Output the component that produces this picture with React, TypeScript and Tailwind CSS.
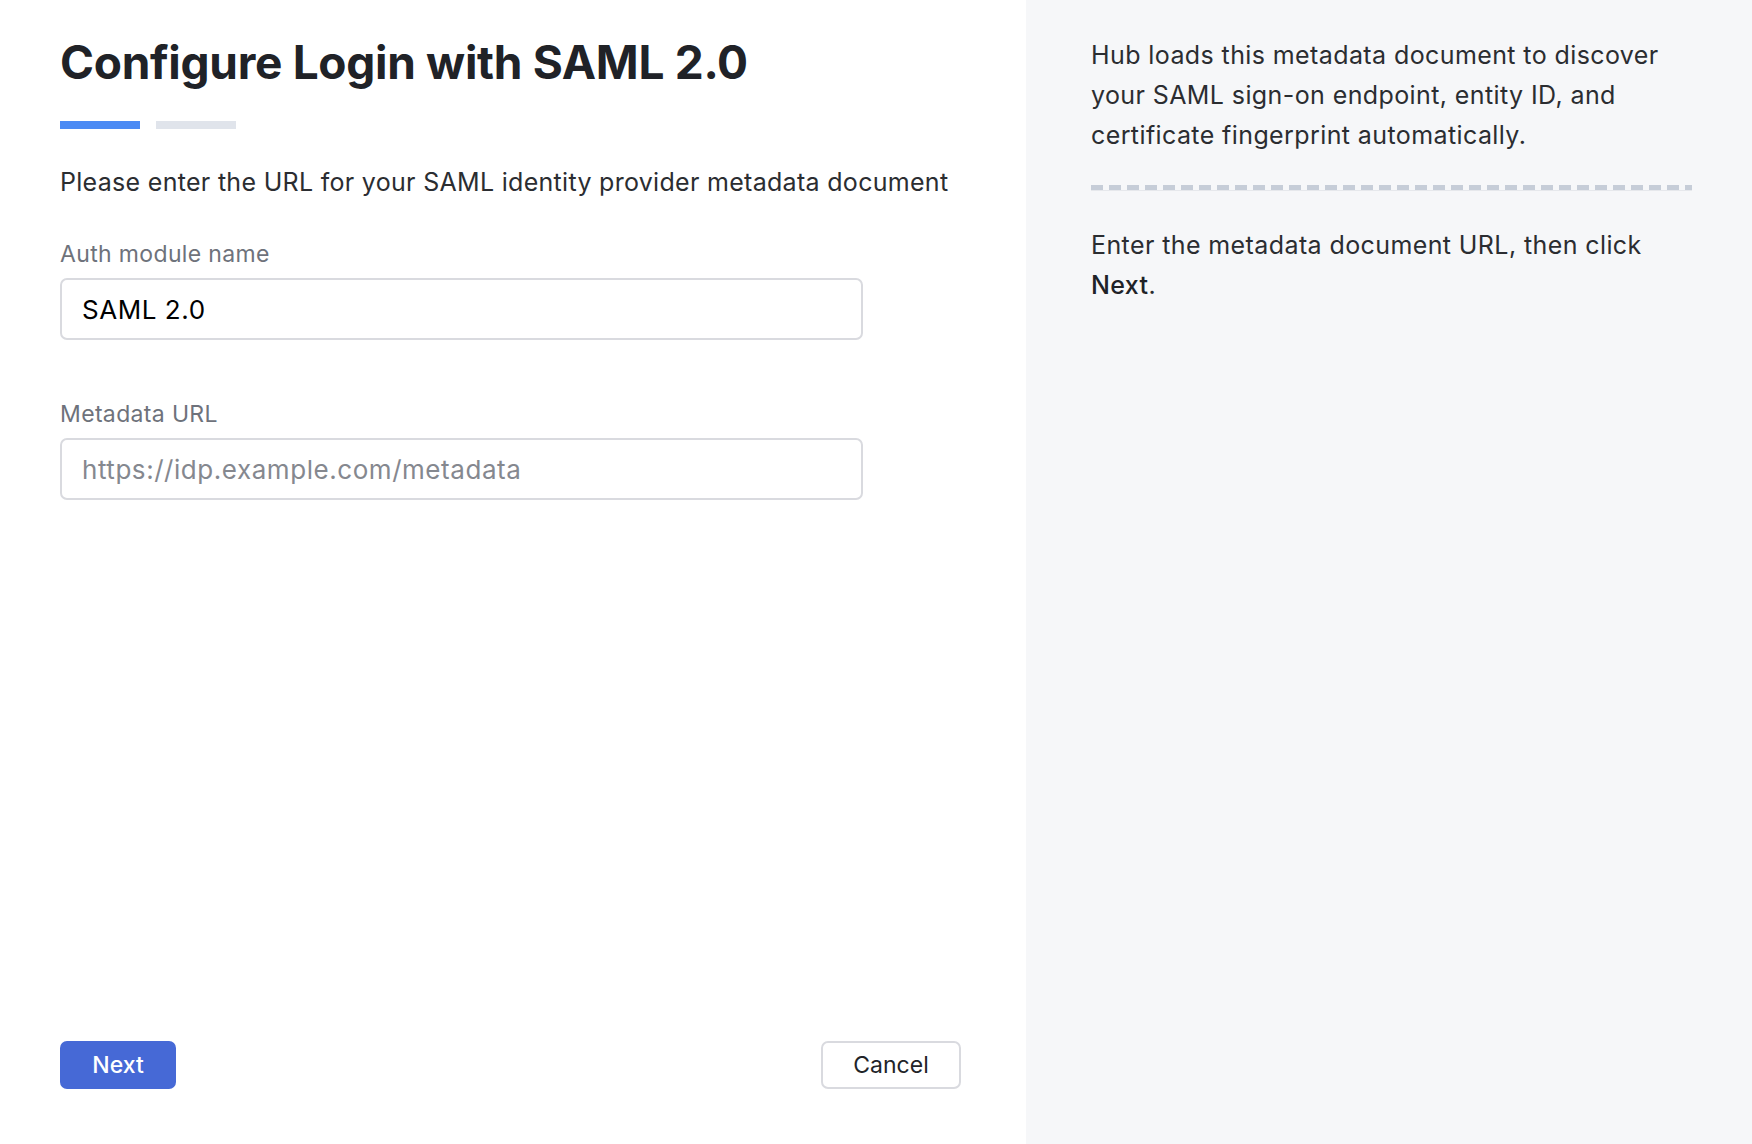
import React, { useEffect, useRef, useState } from 'react';

const font = { fontFamily: 'Inter, "Noto Sans", sans-serif' };

const Field: React.FC<{
  label: string;
  value: string;
  placeholder?: string;
  onChange: (v: string) => void;
  className?: string;
  autoFocus?: boolean;
}> = ({ label, value, placeholder, onChange, className, autoFocus }) => {
  const inputRef = useRef<HTMLInputElement | null>(null);

  // put the caret after the prefilled value
  useEffect(() => {
    if (!autoFocus || !inputRef.current) return;
    const el = inputRef.current;
    el.focus();
    el.setSelectionRange(el.value.length, el.value.length);
  }, [autoFocus]);

  return (
    <div className={`flex flex-col ${className ?? ''}`}>
      <label className="text-[23px] leading-[28px] tracking-[0.35px] text-[#6e727b]">{label}</label>
      <input
        ref={inputRef}
        className="mt-[10px] h-[62px] w-[803px] rounded-[7px] border-2 border-[#d9dadf] bg-white px-[20px] text-[26px] tracking-[0.55px] text-black caret-black outline-none placeholder:text-[#85888f]"
        value={value}
        placeholder={placeholder}
        onChange={e => onChange(e.target.value)}
      />
    </div>
  );
};

export default function App() {
  const [name, setName] = useState('SAML 2.0');
  const [url, setUrl] = useState('');

  return (
    <div className="flex h-[1144px] w-full bg-white" style={font}>
      {/* left: wizard step */}
      <div className="flex w-[1026px] shrink-0 flex-col pl-[60px] pr-[65px] pt-[34px] pb-[55px]">
        <h1 className="text-[46px] font-bold leading-[56px] tracking-[-0.3px] text-[#202227]">
          Configure Login with SAML 2.0
        </h1>
        <div className="mt-[31px] flex gap-4">
          <div className="h-2 w-20 bg-[#4a8af4]" />
          <div className="h-2 w-20 bg-[#e0e4eb]" />
        </div>
        <p className="mt-[37px] text-[25px] leading-[32px] tracking-[0.3px] text-[#2b2d31]">
          Please enter the URL for your SAML identity provider metadata document
        </p>
        <Field className="mt-[42px]" label="Auth module name" value={name} onChange={setName} autoFocus />
        <Field
          className="mt-[60px]"
          label="Metadata URL"
          value={url}
          placeholder="https://idp.example.com/metadata"
          onChange={setUrl}
        />
        <div className="mt-auto flex items-center justify-between">
          <button className="h-12 w-[116px] rounded-[7px] bg-[#4669d6] text-[23px] font-medium text-white">
            Next
          </button>
          <button className="h-12 w-[140px] rounded-[7px] border-2 border-[#d9dadf] bg-white text-[23px] text-[#222428]">
            Cancel
          </button>
        </div>
      </div>

      {/* right: help */}
      <div className="flex-1 bg-[#f6f7f9] pl-[65px] pr-[60px] pt-[35px]">
        <p className="text-[25px] leading-[40px] tracking-[0.4px] text-[#2b2d31]">
          Hub loads this metadata document to discover your SAML sign-on endpoint, entity ID, and
          certificate fingerprint automatically.
        </p>
        <div className="mt-[30px] h-[5px] bg-[repeating-linear-gradient(90deg,#c6cdd8_0_12px,transparent_12px_18px)]" />
        <div className="h-px bg-[#e6e8ec]" />
        <p className="mt-[34px] text-[25px] leading-[40px] tracking-[0.4px] text-[#2b2d31]">
          Enter the metadata document URL, then click <span className="font-medium text-[#202227]">Next</span>.
        </p>
      </div>
    </div>
  );
}
